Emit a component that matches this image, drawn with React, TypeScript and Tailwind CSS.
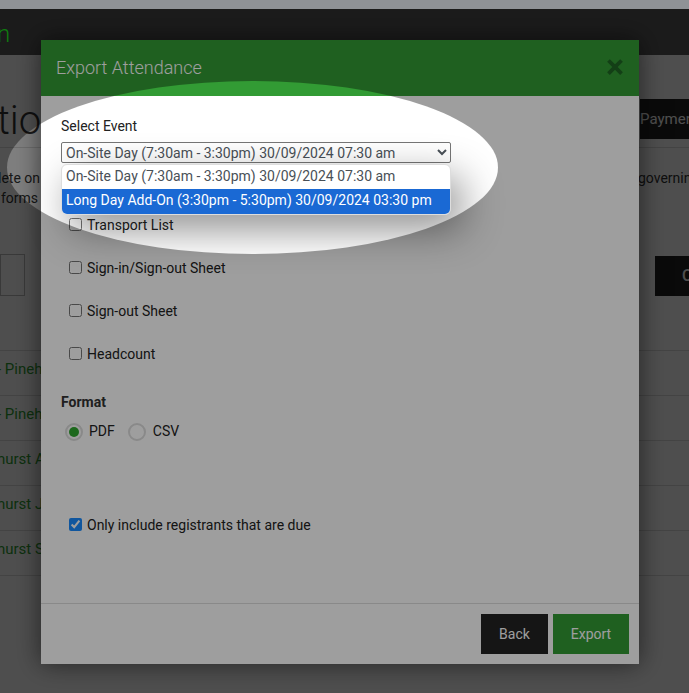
const rows = ['- Pineh', '- Pineh', 'hurst A', 'hurst J', 'hurst S']
const reports = ['Transport List', 'Sign-in/Sign-out Sheet', 'Sign-out Sheet', 'Headcount']

function PageBehind() {
  return (
    <div className="h-[693px] bg-white text-[#333] overflow-hidden">
      <div className="h-[46px] mt-[9px] bg-[#5a5a5a]" />
      <div className="flex justify-between items-start h-[93px] pt-[44px] border-b border-[#ddd]">
        <span className="text-[40px] leading-[44px] font-light text-[#333] -ml-[3px]">tion</span>
        <div className="w-[49px] h-[40px] bg-[#222] text-[#fff] text-[15px] flex items-center overflow-hidden whitespace-nowrap">Payment</div>
      </div>
      <div className="flex justify-between pt-[20px] h-[106px] text-sm leading-[20px]">
        <div className="-ml-[2px]">
          <p>lete on</p>
          <p className="ml-[3px]">forms</p>
        </div>
        <p className="w-[51px] overflow-hidden">governing</p>
      </div>
      <div className="flex justify-between items-start h-[96px]">
        <div className="w-[25px] h-[42px] border border-[#bbb]" />
        <div className="w-[34px] h-[40px] mt-[2px] bg-[#222] text-white font-medium flex items-center pl-[27px] overflow-hidden">C</div>
      </div>
      <div className="border-t border-[#ddd]">
        {rows.map((r, i) => (
          <div key={i} className="h-[45px] border-b border-[#ddd] flex items-center pb-[8px] text-[15px] text-[#2f9e33] -ml-[3px] whitespace-nowrap">
            {r}
          </div>
        ))}
      </div>
    </div>
  )
}

function ExportModal() {
  return (
    <div className="absolute left-[41px] top-[40px] w-[598px] h-[624px] bg-white flex flex-col shadow-[0_0_24px_rgba(0,0,0,0.55)]">
      <div className="h-[56px] shrink-0 bg-[#329b34] flex items-center justify-between pl-[15px] pr-[15px]">
        <h2 className="text-[18px] font-light text-white -mt-[2px]">Export Attendance</h2>
        <svg width="18" height="18" viewBox="0 0 16 16" className="text-[#206624] -mt-[2px]">
          <path d="M1 3.4 3.4 1 8 5.6 12.6 1 15 3.4 10.4 8 15 12.6 12.6 15 8 10.4 3.4 15 1 12.6 5.6 8Z" fill="currentColor" />
        </svg>
      </div>
      <div className="flex-1 pl-[20px] pt-[20px] text-sm text-[#222]">
        <label className="block leading-[20px]">Select Event</label>
        <select className="block mt-[6px] w-[390px] h-[21px] border border-[#767676] rounded-[2px] bg-white text-sm text-[#495057]">
          <option>On-Site Day (7:30am - 3:30pm) 30/09/2024 07:30 am</option>
          <option>Long Day Add-On (3:30pm - 5:30pm) 30/09/2024 03:30 pm</option>
        </select>
        <div className="mt-[52px] ml-[8px] flex flex-col gap-[23px]">
          {reports.map((r) => (
            <label key={r} className="flex items-center gap-[5px] h-[20px] leading-[20px]">
              <input type="checkbox" className="w-[13px] h-[13px] m-0 -mt-[2px]" />
              {r}
            </label>
          ))}
        </div>
        <div className="mt-[28px] font-bold text-[#333] leading-[20px]">Format</div>
        <div className="mt-[9px] ml-[4px] flex items-center text-sm h-[20px]">
          <span className="w-[18px] h-[18px] mt-[2px] rounded-full border-2 border-[#ddd] flex items-center justify-center">
            <span className="w-[10px] h-[10px] rounded-full bg-[#2fa82f]" />
          </span>
          <span className="ml-[6px]">PDF</span>
          <span className="ml-[13px] w-[18px] h-[18px] mt-[2px] rounded-full border-2 border-[#ddd]" />
          <span className="ml-[7px]">CSV</span>
        </div>
        <label className="mt-[74px] ml-[8px] flex items-center gap-[5px] h-[20px] leading-[20px]">
          <input type="checkbox" defaultChecked className="w-[13px] h-[13px] m-0 -mt-[2px] accent-[#1a8cff]" />
          Only include registrants that are due
        </label>
      </div>
      <div className="h-[61px] shrink-0 border-t border-[#ddd] flex items-center justify-end gap-[5px] pr-[10px]">
        <button className="w-[67px] h-[40px] bg-[#222] text-white text-sm">Back</button>
        <button className="w-[76px] h-[40px] bg-[#329b34] text-white text-sm">Export</button>
      </div>
    </div>
  )
}

export default function App() {
  return (
    <div className="relative w-[689px] h-[693px] overflow-hidden font-['Roboto',sans-serif]">
      <PageBehind />
      <div className="absolute inset-0 bg-black/50" />
      <ExportModal />
      {/* spotlight hole around the select */}
      <div className="absolute left-[7px] top-[81px] w-[491px] h-[173px] rounded-[50%] shadow-[0_0_0_1000px_rgba(0,0,0,0.38)]" />
      {/* open dropdown list, drawn above the spotlight */}
      <div className="absolute left-[61px] top-[164px] w-[390px] h-[51px] rounded-[6px] overflow-hidden border border-[#ddd] bg-white text-sm shadow-[10px_14px_40px_rgba(0,0,0,0.45)]">
        <div className="h-[24px] leading-[22px] pl-[4px] text-[#495057]">On-Site Day (7:30am - 3:30pm) 30/09/2024 07:30 am</div>
        <div className="h-[25px] leading-[23px] pl-[4px] bg-[#1a69d4] text-white">Long Day Add-On (3:30pm - 5:30pm) 30/09/2024 03:30 pm</div>
      </div>
      <span className="absolute -left-[3px] top-[16px] text-[24px] font-light text-[#0f7d0f]">n</span>
      <div className="absolute left-0 top-0 w-full h-[9px] bg-[#8f9296]" />
    </div>
  )
}
